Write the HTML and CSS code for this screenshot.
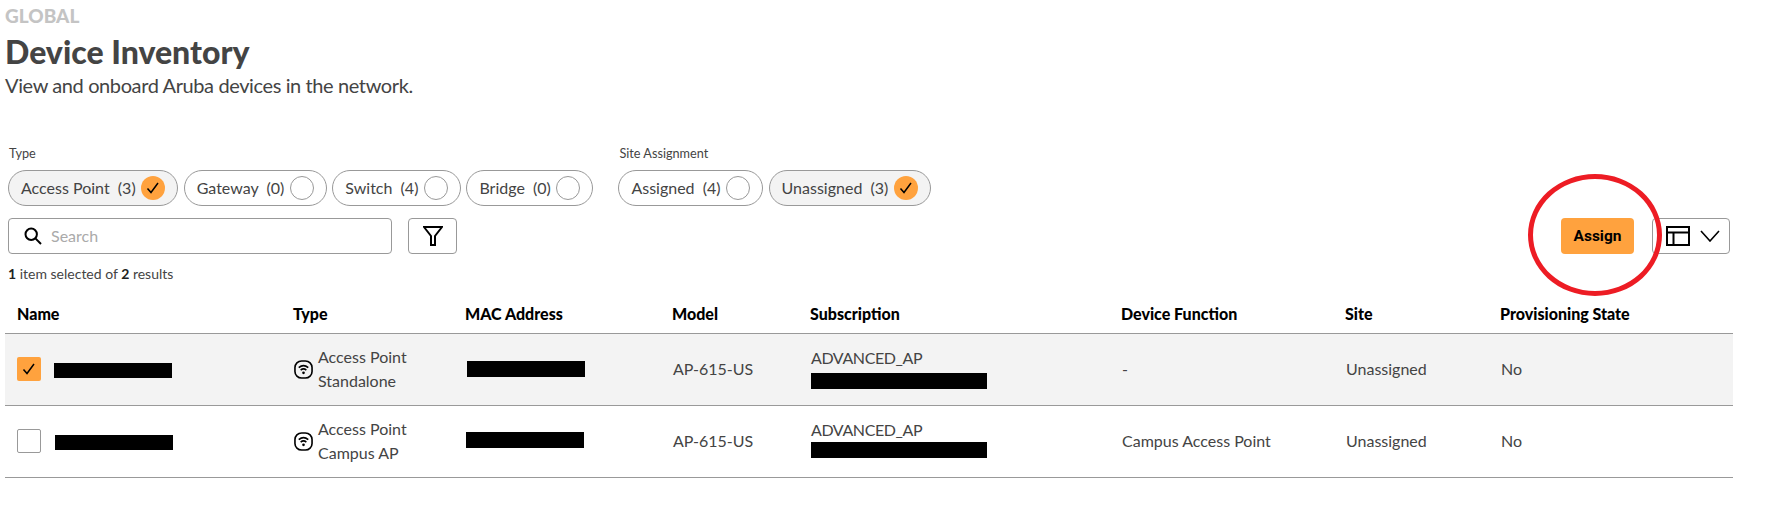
FILE: index.html
```html
<!DOCTYPE html>
<html lang="en">
<head>
    <meta charset="UTF-8">
    <meta name="viewport" content="width=device-width, initial-scale=1.0">
    <title>Device Inventory</title>
    <link rel="stylesheet" href="styles.css">
</head>
<body>
    <div class="page">
        <div class="crumb">GLOBAL</div>
        <h1>Device Inventory</h1>
        <p class="subtitle">View and onboard Aruba devices in the network.</p>

        <div class="filters">
            <div class="filter-group">
                <div class="filter-label">Type</div>
                <div class="chips">
                    <div class="chip on">Access Point&nbsp; (3)<span class="dot"><svg viewBox="0 0 24 24"><path d="M6.5 12.5l3.5 4 7-9.5"/></svg></span></div>
                    <div class="chip">Gateway&nbsp; (0)<span class="dot"></span></div>
                    <div class="chip">Switch&nbsp; (4)<span class="dot"></span></div>
                    <div class="chip">Bridge&nbsp; (0)<span class="dot"></span></div>
                </div>
            </div>
            <div class="filter-group site">
                <div class="filter-label">Site Assignment</div>
                <div class="chips">
                    <div class="chip">Assigned&nbsp; (4)<span class="dot"></span></div>
                    <div class="chip on">Unassigned&nbsp; (3)<span class="dot"><svg viewBox="0 0 24 24"><path d="M6.5 12.5l3.5 4 7-9.5"/></svg></span></div>
                </div>
            </div>
        </div>

        <div class="toolbar">
            <div class="search">
                <svg viewBox="0 0 18 18"><circle cx="7.2" cy="7.2" r="5.7"/><path d="M11.4 11.4l5.6 5.6"/></svg>
                <span>Search</span>
            </div>
            <button class="filter-btn"><svg viewBox="0 0 20 20"><path d="M1 1h18l-7 9v9H8v-9z"/></svg></button>
            <button class="assign">Assign</button>
            <button class="view-btn">
                <svg class="view-icon" viewBox="0 0 24 20"><path d="M1 1h22v18H1zM1 6.5h22M7.5 6.5V19"/></svg>
                <svg class="chevron" viewBox="0 0 20 12"><path d="M1 1l9 10 9-10"/></svg>
            </button>
            <div class="ring"></div>
        </div>

        <div class="results"><b>1</b> item selected of <b>2</b> results</div>

        <table>
            <colgroup>
                <col class="c-name"><col class="c-type"><col class="c-mac"><col class="c-model">
                <col class="c-sub"><col class="c-func"><col class="c-site"><col class="c-state">
            </colgroup>
            <thead>
                <tr>
                    <th>Name</th><th>Type</th><th>MAC Address</th><th>Model</th>
                    <th>Subscription</th><th>Device Function</th><th>Site</th><th>Provisioning State</th>
                </tr>
            </thead>
            <tbody>
                <tr class="selected">
                    <td><div class="name-cell"><span class="box checked"><svg viewBox="0 0 24 24"><path d="M6.5 12.5l3.5 4 7-9.5"/></svg></span><span class="redact r-name"></span></div></td>
                    <td><div class="type-cell"><svg class="ap" viewBox="0 0 20 20"><rect x="1" y="1" width="18" height="18" rx="7"/><path d="M5 8c3-2.6 7-2.6 10 0M7 10.6c1.900-1.500 4.100-1.500 6 0"/><circle cx="10" cy="13.500" r="1.400"/></svg><div>Access Point<br>Standalone</div></div></td>
                    <td><span class="redact r-mac"></span></td>
                    <td>AP-615-US</td>
                    <td><span class="plan">ADVANCED_AP</span><span class="redact r-sub"></span></td>
                    <td>-</td>
                    <td>Unassigned</td>
                    <td>No</td>
                </tr>
                <tr>
                    <td><div class="name-cell"><span class="box"></span><span class="redact r-name shifted"></span></div></td>
                    <td><div class="type-cell"><svg class="ap" viewBox="0 0 20 20"><rect x="1" y="1" width="18" height="18" rx="7"/><path d="M5 8c3-2.6 7-2.6 10 0M7 10.6c1.900-1.500 4.100-1.500 6 0"/><circle cx="10" cy="13.500" r="1.400"/></svg><div>Access Point<br>Campus AP</div></div></td>
                    <td><span class="redact r-mac up"></span></td>
                    <td>AP-615-US</td>
                    <td><span class="plan">ADVANCED_AP</span><span class="redact r-sub up"></span></td>
                    <td>Campus Access Point</td>
                    <td>Unassigned</td>
                    <td>No</td>
                </tr>
            </tbody>
        </table>
    </div>
</body>
</html>
```

FILE: styles.css
```css
body {
    margin: 0;
    font-family: "Lato", "Noto Sans", sans-serif;
    color: #444;
    background-color: #fff;
}
.page {
    padding: 7px 5px 0;
}
.crumb {
    font-size: 19px;
    line-height: 18px;
    font-weight: 900;
    color: #c4c4c4;
}
h1 {
    margin: 11px 0 0;
    font-size: 32px;
    line-height: 32px;
    font-weight: 900;
    color: #444;
}
.subtitle {
    margin: 5px 0 0;
    font-size: 20px;
    line-height: 24px;
    letter-spacing: -0.39px;
}
.filters {
    display: flex;
    gap: 25px;
    margin: 49px 0 0 3px;
}
.filter-label {
    font-size: 12.7px;
    line-height: 14px;
    margin-bottom: 10px;
    padding-left: 1px;
}
.chips {
    display: flex;
    gap: 5.5px;
}
.chip {
    display: flex;
    align-items: center;
    gap: 5.5px;
    height: 36px;
    box-sizing: border-box;
    padding: 0 12px 2px;
    border: 1px solid #999;
    border-radius: 18px;
    font-size: 16px;
    white-space: nowrap;
}
.chip.on {
    background-color: #f3f3f3;
}
.dot {
    width: 24px;
    height: 24px;
    margin-bottom: -2px;
    box-sizing: border-box;
    border: 1px solid #999;
    border-radius: 50%;
}
.chip.on .dot {
    border: none;
    background-color: #ffa23e;
}
.dot svg, .box svg {
    display: block;
    width: 24px;
    height: 24px;
    fill: none;
    stroke: #000;
    stroke-width: 1.5;
}
.toolbar {
    position: relative;
    display: flex;
    align-items: center;
    margin: 12px 0 0 3px;
}
.search {
    display: flex;
    align-items: center;
    gap: 9px;
    width: 384px;
    height: 36px;
    box-sizing: border-box;
    padding: 0 0 2px 15px;
    border: 1px solid #999;
    border-radius: 4px;
    font-size: 16px;
    color: #aaa;
}
.search svg {
    width: 18px;
    height: 18px;
    margin-bottom: -2px;
    fill: none;
    stroke: #000;
    stroke-width: 2;
}
button {
    height: 36px;
    box-sizing: border-box;
    padding: 0;
    border-radius: 4px;
    background-color: #fff;
    font-family: inherit;
}
.filter-btn {
    width: 49px;
    margin-left: 16px;
    border: 1px solid #999;
    display: flex;
    align-items: center;
    justify-content: center;
}
.filter-btn svg {
    width: 20px;
    height: 20px;
    fill: none;
    stroke: #000;
    stroke-width: 2;
}
.assign {
    width: 73px;
    margin-left: auto;
    border: none;
    background-color: #ffa23e;
    font-family: "Roboto", sans-serif;
    font-size: 15.5px;
    font-weight: 700;
    color: #000;
}
.view-btn {
    display: flex;
    align-items: center;
    gap: 10px;
    width: 78px;
    margin: 0 36px 0 18px;
    padding-left: 13px;
    border: 1px solid #999;
}
.view-icon {
    width: 24px;
    height: 20px;
    fill: none;
    stroke: #000;
    stroke-width: 2;
}
.chevron {
    width: 20px;
    height: 12px;
    fill: none;
    stroke: #000;
    stroke-width: 1.6;
}
.ring {
    position: absolute;
    right: 104px;
    top: -44px;
    width: 134px;
    height: 122px;
    box-sizing: border-box;
    border: 5px solid #ed1c24;
    border-radius: 50%;
}
.results {
    margin: 12px 0 0 3px;
    font-size: 14px;
    line-height: 16px;
}
.results b {
    color: #222;
}
table {
    width: 1728px;
    margin-top: 14px;
    border-collapse: collapse;
    table-layout: fixed;
}
.c-name { width: 277px; }
.c-type { width: 172px; }
.c-mac { width: 207px; }
.c-model { width: 138px; }
.c-sub { width: 311px; }
.c-func { width: 224px; }
.c-site { width: 155px; }
.c-state { width: 244px; }
th {
    height: 37px;
    box-sizing: border-box;
    padding: 0 0 2px 11px;
    border-bottom: 1px solid #999;
    text-align: left;
    font-size: 16px;
    font-weight: 900;
    color: #000;
}
th:first-child {
    padding-left: 12px;
}
td {
    height: 71px;
    padding: 0 0 0 12px;
    border-bottom: 1px solid #999;
    font-size: 16px;
    line-height: 23.5px;
}
tr.selected {
    background-color: #f3f3f3;
}
.plan {
    letter-spacing: -0.4px;
}
.name-cell {
    display: flex;
    align-items: center;
    gap: 13px;
}
.box {
    width: 24px;
    height: 24px;
    box-sizing: border-box;
    border: 1px solid #999;
    border-radius: 2px;
    background-color: #fff;
}
.box.checked {
    border: none;
    background-color: #ffa23e;
}
.type-cell {
    display: flex;
    align-items: center;
    gap: 5px;
    line-height: 24.5px;
}
.ap {
    width: 19px;
    height: 19px;
    fill: none;
    stroke: #000;
    stroke-width: 1.7;
}
.ap circle {
    fill: #000;
    stroke: none;
}
.redact {
    display: block;
    background-color: #000;
}
.r-name {
    width: 118px;
    height: 15px;
    margin-top: 2px;
}
.r-name.shifted {
    margin-left: 1px;
}
.r-mac {
    width: 118px;
    height: 16px;
    margin-left: 1px;
}
.r-mac.up {
    margin: -3px 0 0 0;
}
.r-sub {
    width: 176px;
    height: 16px;
    margin: 4px 0 3px 0;
}
.r-sub.up {
    margin: 1px 0 6px 0;
}
```
